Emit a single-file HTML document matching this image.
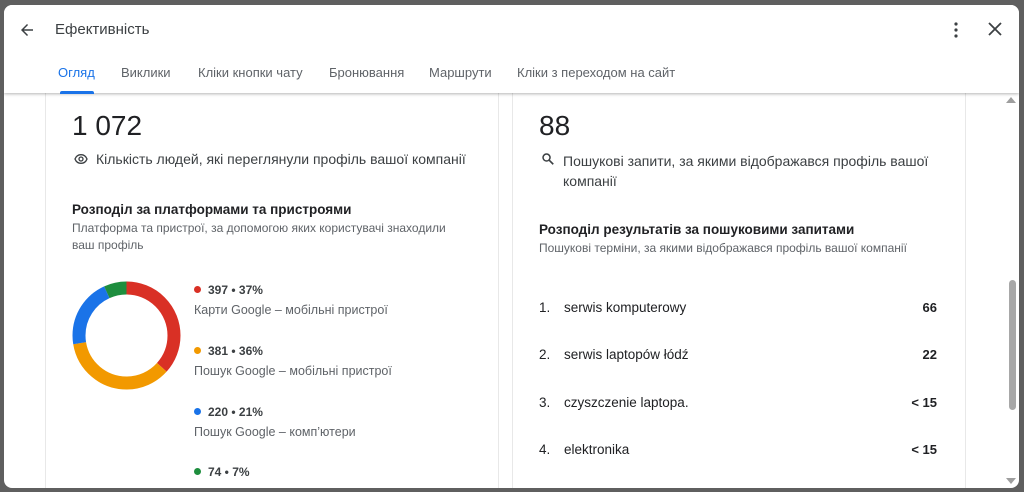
<!DOCTYPE html>
<html><head><meta charset="utf-8"><style>
*{margin:0;padding:0;box-sizing:border-box}
body{width:1024px;height:492px;background:#5f5f5f;font-family:"Liberation Sans",Arial,sans-serif;position:relative;overflow:hidden;color:#202124}
.dlg{position:absolute;left:4px;top:5px;width:1015px;height:483px;background:#fff;border-radius:8px;overflow:hidden}
.hdr{position:absolute;left:0;top:0;width:1015px;height:88px;background:#fff;box-shadow:0 1px 3px rgba(0,0,0,.3);z-index:2}
.title{position:absolute;left:51px;top:16px;font-size:15px;color:#3c4043}
.tab{position:absolute;top:60px;font-size:13px;color:#5f6368}
.card{position:absolute;top:88px;border-left:1px solid #e8e8e8;border-right:1px solid #e8e8e8;height:400px}
.big{position:absolute;font-size:28px;color:#202124}
.t{position:absolute;font-size:14px;color:#3c4043}
.h{position:absolute;font-size:13.5px;font-weight:bold;color:#202124}
.s{position:absolute;font-size:12px;color:#5f6368;line-height:17px}
.lv{position:absolute;font-size:12px;font-weight:bold;color:#3c4043}
.dot{display:inline-block;width:7px;height:7px;border-radius:50%;margin-right:7px;vertical-align:1px}
.ll{position:absolute;font-size:12.5px;color:#5f6368}
.row{position:absolute;left:539px;width:398px;font-size:13.5px;color:#202124}
.row span.n{display:inline-block;width:25px}
.row b{position:absolute;right:0;font-weight:bold;font-size:13px}
</style></head><body>
<div class="dlg">
<div class="hdr">
<svg style="position:absolute;left:14px;top:16px" width="18" height="18" viewBox="0 0 24 24"><path d="M20 11H7.8l5.6-5.6L12 4l-8 8 8 8 1.4-1.4L7.8 13H20z" fill="#3c4043"/></svg>
<div class="title">Ефективність</div>
<svg style="position:absolute;left:943px;top:15px" width="18" height="20" viewBox="0 0 6 20"><circle cx="3" cy="4" r="1.6" fill="#3c4043"/><circle cx="3" cy="10" r="1.6" fill="#3c4043"/><circle cx="3" cy="16" r="1.6" fill="#3c4043"/></svg>
<svg style="position:absolute;left:983px;top:16px" width="16" height="16" viewBox="0 0 16 16"><path d="M2 2L14 14M14 2L2 14" stroke="#3c4043" stroke-width="1.8"/></svg>
<div class="tab" style="left:54px;color:#1a73e8">Огляд</div>
<div style="position:absolute;left:56px;top:86px;width:34px;height:3px;background:#1a73e8;border-radius:2px 2px 0 0"></div>
<div class="tab" style="left:117px">Виклики</div>
<div class="tab" style="left:194px">Кліки кнопки чату</div>
<div class="tab" style="left:325px">Бронювання</div>
<div class="tab" style="left:425px">Маршрути</div>
<div class="tab" style="left:513px">Кліки з переходом на сайт</div>
</div>
</div>
<div class="card" style="left:45px;width:454px"></div>
<div class="card" style="left:512px;width:454px"></div>
<div class="big" style="left:72px;top:110px">1 072</div>
<svg style="position:absolute;left:72px;top:151px" width="18" height="16" viewBox="0 0 24 24"><path d="M12 5.5c4 0 7.4 2.3 9 6.5-1.6 4.2-5 6.5-9 6.5s-7.4-2.3-9-6.5c1.6-4.2 5-6.5 9-6.5z" fill="none" stroke="#3c4043" stroke-width="2"/><circle cx="12" cy="12" r="3" fill="none" stroke="#3c4043" stroke-width="2"/></svg>
<div class="t" style="left:96px;top:151px">Кількість людей, які переглянули профіль вашої компанії</div>
<div class="h" style="left:72px;top:202px">Розподіл за платформами та пристроями</div>
<div class="s" style="left:72px;top:220px;width:392px">Платформа та пристрої, за допомогою яких користувачі знаходили ваш профіль</div>
<svg style="position:absolute;left:72px;top:281px" width="109" height="109" viewBox="0 0 109 109"><g transform="rotate(-90 54.5 54.5)" fill="none" stroke-width="13">
<circle cx="54.5" cy="54.5" r="47.5" stroke="#d93025" stroke-dasharray="109.3 400"/>
<circle cx="54.5" cy="54.5" r="47.5" stroke="#f29900" stroke-dasharray="0 109.3 106.4 400"/>
<circle cx="54.5" cy="54.5" r="47.5" stroke="#1a73e8" stroke-dasharray="0 215.7 62 400"/>
<circle cx="54.5" cy="54.5" r="47.5" stroke="#1e8e3e" stroke-dasharray="0 277.7 20.8 400"/>
</g></svg>
<div class="lv" style="left:194px;top:283px"><span class="dot" style="background:#d93025"></span>397 • 37%</div>
<div class="ll" style="left:194px;top:303px">Карти Google – мобільні пристрої</div>
<div class="lv" style="left:194px;top:344px"><span class="dot" style="background:#f29900"></span>381 • 36%</div>
<div class="ll" style="left:194px;top:364px">Пошук Google – мобільні пристрої</div>
<div class="lv" style="left:194px;top:405px"><span class="dot" style="background:#1a73e8"></span>220 • 21%</div>
<div class="ll" style="left:194px;top:425px">Пошук Google – комп’ютери</div>
<div class="lv" style="left:194px;top:465px"><span class="dot" style="background:#1e8e3e"></span>74 • 7%</div>
<div class="big" style="left:539px;top:110px">88</div>
<svg style="position:absolute;left:541px;top:152px" width="14" height="14" viewBox="0 0 24 24"><circle cx="9.5" cy="9.5" r="6" fill="none" stroke="#3c4043" stroke-width="2.6"/><path d="M14 14l7 7" stroke="#3c4043" stroke-width="2.8"/></svg>
<div class="t" style="left:563px;top:151px;width:380px;line-height:20px">Пошукові запити, за якими відображався профіль вашої компанії</div>
<div class="h" style="left:539px;top:222px">Розподіл результатів за пошуковими запитами</div>
<div class="s" style="left:539px;top:240px">Пошукові терміни, за якими відображався профіль вашої компанії</div>
<div class="row" style="top:300px"><span class="n">1.</span>serwis komputerowy<b>66</b></div>
<div class="row" style="top:347px"><span class="n">2.</span>serwis laptopów łódź<b>22</b></div>
<div class="row" style="top:395px"><span class="n">3.</span>czyszczenie laptopa.<b>&lt; 15</b></div>
<div class="row" style="top:442px"><span class="n">4.</span>elektronika<b>&lt; 15</b></div>
<div style="position:absolute;left:1006px;top:97px;width:0;height:0;border-left:5px solid transparent;border-right:5px solid transparent;border-bottom:6px solid #9e9e9e"></div>
<div style="position:absolute;left:1009px;top:280px;width:7px;height:130px;background:#a8a8a8;border-radius:4px"></div>
<div style="position:absolute;left:1006px;top:478px;width:0;height:0;border-left:5px solid transparent;border-right:5px solid transparent;border-top:6px solid #9e9e9e"></div>
</body></html>
